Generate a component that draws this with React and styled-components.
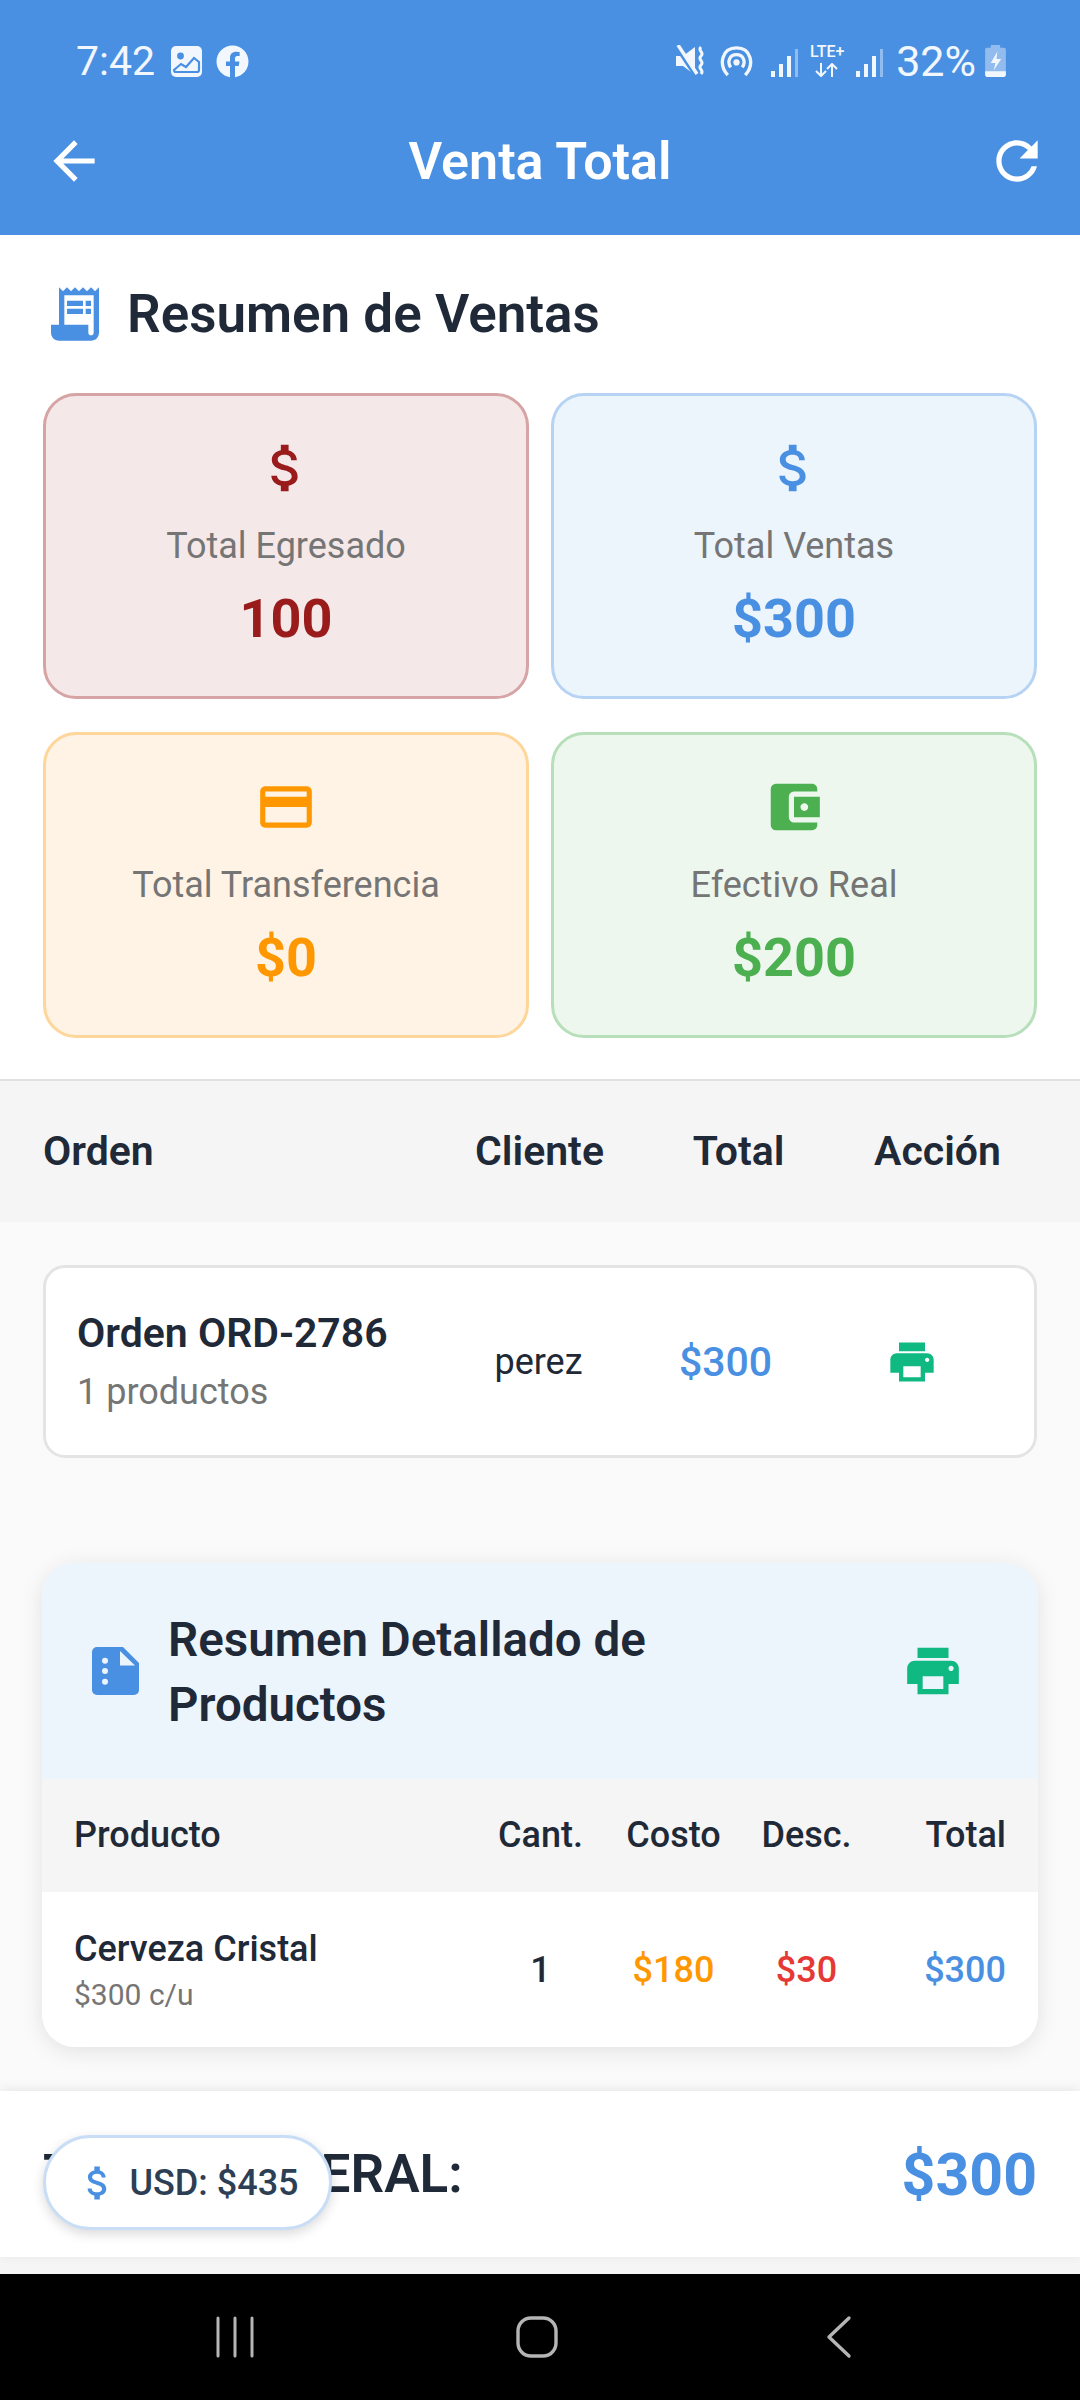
import React from "react";
import styled, { createGlobalStyle } from "styled-components";
import {
  MdArrowBack,
  MdRefresh,
  MdAttachMoney,
  MdCreditCard,
  MdAccountBalanceWallet,
  MdPrint,
  MdReceiptLong,
} from "react-icons/md";
import { FaFacebook } from "react-icons/fa";

const Global = createGlobalStyle`
  html, body { margin: 0; padding: 0; background: #000; }
  * { box-sizing: border-box; }
  body { font-family: Roboto, "Noto Sans", sans-serif; }
`;

const stats = [
  { label: "Total Egresado", value: "100", color: "#991b1b", bg: "#f5e8e8", line: "#d6a4a4", Icon: MdAttachMoney },
  { label: "Total Ventas", value: "$300", color: "#4a90e2", bg: "#ecf4fc", line: "#b7d3f3", Icon: MdAttachMoney },
  { label: "Total Transferencia", value: "$0", color: "#ff9800", bg: "#fff3e6", line: "#ffd699", Icon: MdCreditCard },
  { label: "Efectivo Real", value: "$200", color: "#4caf50", bg: "#edf7ee", line: "#b7dfb9", Icon: MdAccountBalanceWallet },
];

const App = () => (
  <Screen>
    <Global />
    <TopBar>
      <StatusBar>
        <StatusGroup>
          <Clock>7:42</Clock>
          <Glyph $ml={5} width="31" height="31" viewBox="0 0 31 31">
            <rect width="31" height="31" rx="5" fill="#f2f7fe" />
            <circle cx="9.5" cy="10" r="3.4" fill="#4a90e2" />
            <path d="M3 24l7-6 5 3 8-9 5 4v8a2 2 0 0 1-2 2H5a2 2 0 0 1-2-2z" fill="none" stroke="#4a90e2" strokeWidth="2.2" />
          </Glyph>
          <FaFacebook size={33} color="#f2f7fe" style={{ marginLeft: 3 }} />
        </StatusGroup>
        <StatusGroup>
          <Glyph width="29" height="32" viewBox="0 0 29 32">
            <path d="M0 11h7l12-9v28l-12-9H0z" fill="#f2f7fe" />
            <path d="M0 1l19 29" stroke="#4a90e2" strokeWidth="4" />
            <path d="M2 0l19 29" stroke="#f2f7fe" strokeWidth="3.4" />
            <path d="M25 2c-4 4 4 5 0 9s4 5 0 9 4 5 0 9" fill="none" stroke="#f2f7fe" strokeWidth="3" />
          </Glyph>
          <Glyph $ml={3} width="35" height="32" viewBox="0 0 36 33">
            <path d="M9 31C-1 20 3 3 18 3s19 17 9 28" fill="none" stroke="#f2f7fe" strokeWidth="3.4" />
            <path d="M12 23c-4-6-1-13 6-13s10 7 6 13" fill="none" stroke="#f2f7fe" strokeWidth="3.4" />
            <circle cx="18" cy="18" r="3.2" fill="#f2f7fe" />
          </Glyph>
          <Signal $ml={6} />
          <LteMark>
            <span>LTE+</span>
            <svg width="24" height="14" viewBox="0 0 24 14">
              <path d="M6 0v13M1 8l5 5 5-5M17 14V1M12 6l5-5 5 5" fill="none" stroke="#f2f7fe" strokeWidth="2" />
            </svg>
          </LteMark>
          <Signal />
          <Percent>32%</Percent>
          <Glyph $ml={-2} width="21" height="32" viewBox="0 0 22 34">
            <path d="M6 0h10v3h4a2 2 0 0 1 2 2v26a3 3 0 0 1-3 3H3a3 3 0 0 1-3-3V5a2 2 0 0 1 2-2h4z" fill="#93bcee" />
            <path d="M0 28h22v3a3 3 0 0 1-3 3H3a3 3 0 0 1-3-3z" fill="#f2f7fe" />
            <path d="M13 7l-7 12h5l-2 8 8-12h-5z" fill="#f2f7fe" />
          </Glyph>
        </StatusGroup>
      </StatusBar>
      <NavRow>
        <MdArrowBack size={62} />
        <Title>Venta Total</Title>
        <MdRefresh size={62} />
      </NavRow>
    </TopBar>

    <Summary>
      <SummaryHead>
        <MdReceiptLong size={64} color="#4a90e2" />
        <SummaryTitle>Resumen de Ventas</SummaryTitle>
      </SummaryHead>
      <StatGrid>
        {stats.map(({ label, value, color, bg, line, Icon }) => (
          <StatCard key={label} $bg={bg} $line={line}>
            <Icon size={62} color={color} />
            <StatLabel>{label}</StatLabel>
            <StatValue $color={color}>{value}</StatValue>
          </StatCard>
        ))}
      </StatGrid>
    </Summary>

    <Body>
      <OrderHead>
        <OrderCol $w={397}>Orden</OrderCol>
        <OrderCol $w={199} $center>Cliente</OrderCol>
        <OrderCol $w={199} $center>Total</OrderCol>
        <OrderCol $w={199} $center>Acción</OrderCol>
      </OrderHead>
      <OrderCard>
        <OrderInfo>
          <OrderName>Orden ORD-2786</OrderName>
          <OrderCount>1 productos</OrderCount>
        </OrderInfo>
        <Client>perez</Client>
        <OrderTotal>$300</OrderTotal>
        <OrderAction>
          <MdPrint size={52} color="#10b981" />
        </OrderAction>
      </OrderCard>

      <DetailCard>
        <DetailHead>
          <DetailTitleWrap>
            <svg width="47" height="48" viewBox="0 0 47 48">
              <path
                d="M5 0h26l16 16v27a5 5 0 0 1-5 5H5a5 5 0 0 1-5-5V5a5 5 0 0 1 5-5z"
                fill="#4a90e2"
              />
              <path d="M28 4v14.6h15z" fill="#ecf4fc" />
              <circle cx="13" cy="13.7" r="3" fill="#ecf4fc" />
              <circle cx="13" cy="24" r="3" fill="#ecf4fc" />
              <circle cx="13" cy="34.7" r="3" fill="#ecf4fc" />
            </svg>
            <DetailTitle>Resumen Detallado de Productos</DetailTitle>
          </DetailTitleWrap>
          <MdPrint size={62} color="#10b981" />
        </DetailHead>
        <DetailRow $head>
          <div>Producto</div>
          <MiddleCell>Cant.</MiddleCell>
          <MiddleCell>Costo</MiddleCell>
          <MiddleCell>Desc.</MiddleCell>
          <TotalCell>Total</TotalCell>
        </DetailRow>
        <DetailRow>
          <div>
            <ProductName>Cerveza Cristal</ProductName>
            <ProductUnit>$300 c/u</ProductUnit>
          </div>
          <MiddleCell>1</MiddleCell>
          <MiddleCell $color="#ff9800">$180</MiddleCell>
          <MiddleCell $color="#e53935">$30</MiddleCell>
          <TotalCell $color="#4a90e2">$300</TotalCell>
        </DetailRow>
      </DetailCard>
    </Body>

    <Footer>
      <FooterLabel>TOTAL GENERAL:</FooterLabel>
      <FooterValue>$300</FooterValue>
      <UsdPill>
        <MdAttachMoney size={44} color="#4a90e2" />
        USD: $435
      </UsdPill>
    </Footer>
    <FooterGap />

    <SystemNav>
      <svg width="38" height="42" viewBox="0 0 38 42">
        <path d="M2 2v38M19 2v38M36 2v38" stroke="#b5b5b5" strokeWidth="3" strokeLinecap="round" />
      </svg>
      <svg width="42" height="42" viewBox="0 0 42 42">
        <rect x="2" y="2" width="38" height="38" rx="13" fill="none" stroke="#b5b5b5" strokeWidth="3.4" />
      </svg>
      <svg width="28" height="44" viewBox="0 0 28 44">
        <path d="M24 3L4 22l20 19" fill="none" stroke="#b5b5b5" strokeWidth="3.4" strokeLinecap="round" strokeLinejoin="round" />
      </svg>
    </SystemNav>
  </Screen>
);

const Screen = styled.div`
  width: 1080px;
  height: 2400px;
  overflow: hidden;
  display: flex;
  flex-direction: column;
  background: #fafafa;
  color: #1f2937;
`;

const TopBar = styled.header`
  height: 235px;
  background: #4a90e2;
  color: #fff;
  padding: 38px 0 0;
`;

const StatusBar = styled.div`
  height: 46px;
  padding: 0 74px 0 76px;
  display: flex;
  align-items: center;
  justify-content: space-between;
`;

const StatusGroup = styled.div`
  display: flex;
  align-items: center;
  gap: 11px;
`;

const Glyph = styled.svg`
  margin-left: ${({ $ml }) => $ml || 0}px;
`;

const Clock = styled.span`
  font-size: 41px;
  font-weight: 400;
  color: #f2f7fe;
`;

const Percent = styled.span`
  font-size: 43px;
  font-weight: 400;
  color: #f2f7fe;
  margin-left: 2px;
`;

const LteMark = styled.div`
  display: flex;
  flex-direction: column;
  align-items: center;
  gap: 4px;
  width: 36px;
  color: #f2f7fe;
  font-size: 16px;
  line-height: 14px;
  font-weight: 500;
`;

const Signal = styled.div`
  width: 27px;
  height: 28px;
  margin-top: 4px;
  margin-left: ${({ $ml }) => $ml || 0}px;
  background: linear-gradient(#f2f7fe, #f2f7fe) 0 100% / 4px 6px no-repeat,
    linear-gradient(#f2f7fe, #f2f7fe) 8px 100% / 4px 13px no-repeat,
    linear-gradient(#f2f7fe, #f2f7fe) 16px 100% / 4px 21px no-repeat,
    linear-gradient(#93bcee, #93bcee) 24px 100% / 3px 28px no-repeat;
`;

const NavRow = styled.div`
  height: 78px;
  margin-top: 38px;
  padding: 0 32px 0 43px;
  display: flex;
  align-items: center;
  justify-content: space-between;
`;

const Title = styled.h1`
  margin: 0 11px 0 0;
  font-size: 52px;
  font-weight: 600;
  color: #fff;
`;

const Summary = styled.section`
  height: 846px;
  background: #fff;
  border-bottom: 2px solid #e0e0e0;
  padding: 47px 43px 0;
`;

const SummaryHead = styled.div`
  display: flex;
  align-items: center;
  gap: 20px;
  height: 64px;
  margin-bottom: 47px;
`;

const SummaryTitle = styled.h2`
  margin: 0;
  font-size: 53px;
  font-weight: 600;
  color: #1f2937;
`;

const StatGrid = styled.div`
  display: grid;
  grid-template-columns: 486px 486px;
  grid-auto-rows: 306px;
  column-gap: 22px;
  row-gap: 33px;
`;

const StatCard = styled.div`
  display: flex;
  flex-direction: column;
  align-items: center;
  padding-top: 41px;
  background: ${({ $bg }) => $bg};
  border: 3px solid ${({ $line }) => $line};
  border-radius: 33px;
`;

const StatLabel = styled.div`
  margin-top: 26px;
  font-size: 36px;
  line-height: 42px;
  color: #757575;
`;

const StatValue = styled.div`
  margin-top: 21px;
  font-size: 54px;
  line-height: 62px;
  font-weight: 700;
  color: ${({ $color }) => $color};
`;

const Body = styled.main`
  flex: 1;
  min-height: 0;
  overflow: hidden;
`;

const OrderHead = styled.div`
  height: 141px;
  padding: 0 43px 2px;
  display: flex;
  align-items: center;
  background: #f5f5f5;
`;

const OrderCol = styled.div`
  width: ${({ $w }) => $w}px;
  text-align: ${({ $center }) => ($center ? "center" : "left")};
  font-size: 41px;
  font-weight: 600;
  color: #1f2937;
`;

const OrderCard = styled.div`
  margin: 43px 43px 0;
  height: 193px;
  padding-left: 31px;
  display: flex;
  align-items: center;
  background: #fff;
  border: 3px solid #e4e4e4;
  border-radius: 22px;
`;

const OrderInfo = styled.div`
  flex: none;
  width: 362px;
  margin-top: -2px;
`;

const OrderName = styled.div`
  font-size: 41px;
  line-height: 50px;
  font-weight: 600;
  color: #1f2937;
`;

const OrderCount = styled.div`
  margin-top: 13px;
  font-size: 36px;
  line-height: 42px;
  color: #757575;
`;

const Client = styled.div`
  flex: none;
  width: 199px;
  text-align: center;
  font-size: 36px;
  color: #1f2937;
`;

const OrderTotal = styled.div`
  flex: none;
  width: 175px;
  text-align: center;
  font-size: 41px;
  font-weight: 500;
  color: #4a90e2;
`;

const OrderAction = styled.div`
  flex: none;
  width: 197px;
  display: flex;
  justify-content: center;
`;

const DetailCard = styled.section`
  margin: 105px 42px 0;
  height: 484px;
  background: #fff;
  border-radius: 33px;
  overflow: hidden;
  box-shadow: 0 4px 22px rgba(0, 0, 0, 0.1);
`;

const DetailHead = styled.div`
  height: 216px;
  padding: 0 74px 0 50px;
  display: flex;
  align-items: center;
  justify-content: space-between;
  background: #ecf4fc;
`;

const DetailTitleWrap = styled.div`
  display: flex;
  align-items: center;
  gap: 29px;
`;

const DetailTitle = styled.h3`
  margin: 0;
  padding-top: 4px;
  width: 560px;
  font-size: 47.5px;
  line-height: 65px;
  font-weight: 600;
  color: #1f2937;
`;

const DetailRow = styled.div`
  display: grid;
  grid-template-columns: 1fr repeat(3, 133px) 133px;
  align-items: center;
  padding: 0 32px ${({ $head }) => ($head ? "2px" : "0")};
  height: ${({ $head }) => ($head ? "113px" : "155px")};
  background: ${({ $head }) => ($head ? "#f5f5f5" : "#fff")};
  font-size: 36px;
  font-weight: 500;
  color: #1f2937;
`;

const MiddleCell = styled.div`
  text-align: center;
  color: ${({ $color }) => $color || "inherit"};
`;

const TotalCell = styled.div`
  text-align: right;
  color: ${({ $color }) => $color || "inherit"};
`;

const ProductName = styled.div`
  font-size: 36px;
  line-height: 42px;
  font-weight: 500;
`;

const ProductUnit = styled.div`
  margin-top: 8px;
  font-size: 30px;
  line-height: 34px;
  font-weight: 400;
  color: #757575;
`;

const Footer = styled.footer`
  position: relative;
  height: 166px;
  padding: 0 43px;
  display: flex;
  align-items: center;
  justify-content: space-between;
  background: #fff;
  box-shadow: 0 -2px 10px rgba(0, 0, 0, 0.08);
`;

const FooterLabel = styled.div`
  font-size: 53px;
  font-weight: 600;
  color: #1f2937;
`;

const FooterValue = styled.div`
  font-size: 59px;
  font-weight: 700;
  color: #4a90e2;
`;

const UsdPill = styled.div`
  position: absolute;
  left: 43px;
  top: 44px;
  width: 289px;
  height: 95px;
  display: flex;
  align-items: center;
  justify-content: center;
  gap: 9px;
  background: #fff;
  border: 3px solid #c9def6;
  border-radius: 48px;
  box-shadow: 0 4px 12px rgba(0, 0, 0, 0.15);
  font-size: 36px;
  font-weight: 500;
  color: #2d3f55;
`;

const FooterGap = styled.div`
  height: 17px;
  background: #f5f5f5;
`;

const SystemNav = styled.nav`
  height: 126px;
  background: #000;
  display: grid;
  grid-template-columns: repeat(3, 302px);
  align-items: center;
  justify-items: center;
  padding-left: 84px;
`;

export default App;
